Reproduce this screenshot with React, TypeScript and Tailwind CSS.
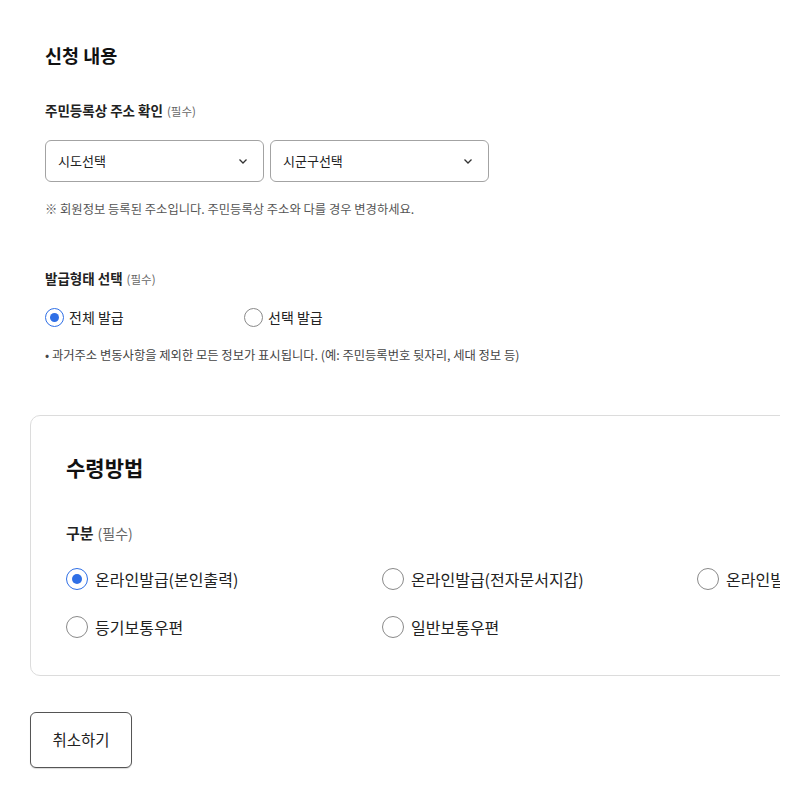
const font = { fontFamily: '"Noto Sans CJK KR", "Noto Sans", sans-serif' };

const Chevron = () => (
    <svg width="12" height="12" viewBox="0 0 12 12" fill="none" stroke="#333" strokeWidth="1.3">
        <path d="M2.5 4.5 L6 8 L9.5 4.5" />
    </svg>
);

const Radio = ({checked, label, size}: { checked?: boolean; label: string; size: "sm" | "lg" }) => {
    const ring = size === "lg" ? "w-[22px] h-[22px]" : "w-[19px] h-[19px]";
    const dot = size === "lg" ? "w-[10px] h-[10px]" : "w-[9px] h-[9px]";
    return (
        <div className={size === "lg" ? "flex items-center gap-[7px] h-[24px]" : "flex items-center gap-[5px] h-[20px]"}>
            <span
                className={`${ring} rounded-full border flex items-center justify-center ${checked ? "border-[#2f6fe6] border-[1.5px]" : "border-[#8a8a8a]"}`}>
                {checked && <span className={`${dot} rounded-full bg-[#2f6fe6]`}/>}
            </span>
            <span className={size === "lg" ? "text-[16px] text-[#222]" : "text-[14px] text-[#222]"}>{label}</span>
        </div>
    );
};

const Select = ({placeholder}: { placeholder: string }) => (
    <div className="w-[219px] h-[42px] border border-[#a3a3a3] rounded-[6px] flex items-center justify-between pl-[12px] pr-[14px]">
        <span className="text-[13px] text-[#222]">{placeholder}</span>
        <Chevron/>
    </div>
);

export default function App() {
    return (
        <div className="w-[780px] overflow-hidden bg-white pb-[32px]" style={font}>
            {/* 신청 내용 */}
            <section className="pl-[45px] pt-[40px]">
                <h2 className="text-[18.5px] leading-[30px] font-bold text-[#111]">신청 내용</h2>

                <div className="mt-[30px] h-[20px] flex items-baseline gap-[4px] text-[13.5px] leading-[20px] font-bold text-[#222]">
                    <span>주민등록상 주소 확인</span>
                    <span className="text-[11.5px] font-normal text-[#666]">(필수)</span>
                </div>
                <div className="mt-[20px] flex gap-[6px]">
                    <Select placeholder="시도선택"/>
                    <Select placeholder="시군구선택"/>
                </div>
                <p className="mt-[18px] text-[12.3px] leading-[18px] text-[#555]">
                    ※ 회원정보 등록된 주소입니다. 주민등록상 주소와 다를 경우 변경하세요.
                </p>

                <div className="mt-[50px] h-[20px] flex items-baseline gap-[4px] text-[13.5px] leading-[20px] font-bold text-[#222]">
                    <span>발급형태 선택</span>
                    <span className="text-[11.5px] font-normal text-[#666]">(필수)</span>
                </div>
                <div className="mt-[19px] grid grid-cols-[199px_199px]">
                    <Radio checked label="전체 발급" size="sm"/>
                    <Radio label="선택 발급" size="sm"/>
                </div>
                <p className="mt-[19px] text-[12.3px] leading-[18px] text-[#444]">
                    • 과거주소 변동사항을 제외한 모든 정보가 표시됩니다. (예: 주민등록번호 뒷자리, 세대 정보 등)
                </p>
            </section>

            {/* 수령방법 */}
            <section
                className="ml-[30px] mt-[51px] w-[1000px] border border-[#dcdcdc] rounded-[10px] pl-[35px] pt-[36px] pb-[36px]">
                <h2 className="text-[21px] leading-[30px] font-bold text-[#111]">수령방법</h2>
                <div className="mt-[40px] h-[22px] flex items-baseline gap-[4px] text-[15px] leading-[22px] font-bold text-[#222]">
                    <span>구분</span>
                    <span className="text-[14px] font-normal text-[#666]">(필수)</span>
                </div>
                <div className="mt-[23px] grid grid-cols-[316px_315px_316px] gap-y-[24px]">
                    <Radio checked label="온라인발급(본인출력)" size="lg"/>
                    <Radio label="온라인발급(전자문서지갑)" size="lg"/>
                    <Radio label="온라인발급(전자증명서)" size="lg"/>
                    <Radio label="등기보통우편" size="lg"/>
                    <Radio label="일반보통우편" size="lg"/>
                </div>
            </section>

            <button
                className="ml-[30px] mt-[36px] w-[102px] h-[56px] border border-[#555] rounded-[6px] bg-white text-[15.5px] text-[#222] shadow-[0_1px_1px_rgba(0,0,0,0.15)]">
                취소하기
            </button>
        </div>
    );
}
